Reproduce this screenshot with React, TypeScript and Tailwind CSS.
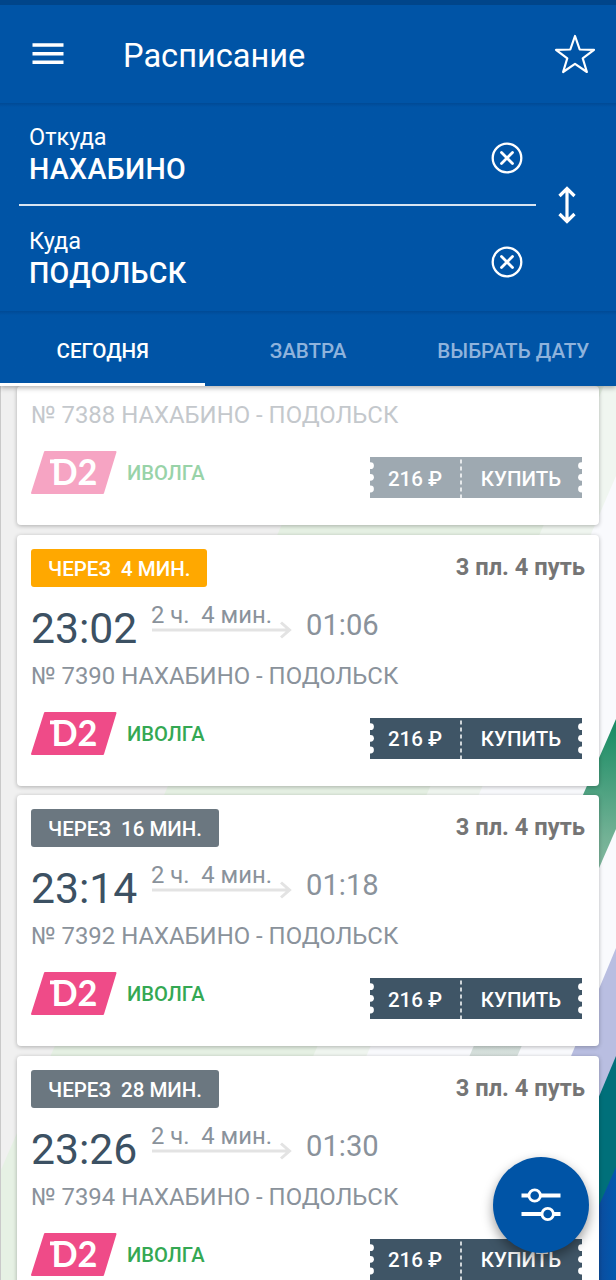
import { clsx } from "clsx";

interface Train {
  number: string;
  wait?: string;
  soon?: boolean;
  departed?: boolean;
  departure?: string;
  arrival?: string;
}

const trains: Train[] = [
  { number: "7388", departed: true },
  { number: "7390", wait: "4 МИН.", soon: true, departure: "23:02", arrival: "01:06" },
  { number: "7392", wait: "16 МИН.", departure: "23:14", arrival: "01:18" },
  { number: "7394", wait: "28 МИН.", departure: "23:26", arrival: "01:30" },
];

const tabs = ["СЕГОДНЯ", "ЗАВТРА", "ВЫБРАТЬ ДАТУ"];

export default function App() {
  return (
    <div className="relative flex h-[1280px] w-[616px] flex-col overflow-hidden bg-[#f0f0f0] font-[Roboto,sans-serif]">
      <header className="relative z-10 bg-[#0054a6] text-white shadow-[0_2px_5px_rgba(0,0,0,0.3)]">
        <div className="h-[5px] bg-[#00458a]" />
        <div className="flex h-[98px] items-center pl-8 pr-5">
          <MenuIcon />
          <h1 className="ml-[59px] flex-1 pt-1 text-[32.6px] leading-[38px]">Расписание</h1>
          <StarIcon />
        </div>

        <div className="flex h-[208px] bg-linear-to-b from-[#004a95] to-[#0054a6] to-[4px]">
          <div className="ml-[19px] w-[517px]">
            <Station label="Откуда" name="НАХАБИНО" />
            <div className="-mt-px mb-px h-[2px] bg-white/85" />
            <Station label="Куда" name="ПОДОЛЬСК" />
          </div>
          <div className="flex flex-1 justify-center pr-[18px] pt-[83px]">
            <SwapIcon />
          </div>
        </div>

        <nav className="grid h-[75px] grid-cols-3 bg-linear-to-b from-[#004a95] to-[#0054a6] to-[4px]">
          {tabs.map((tab, i) => (
            <div
              key={tab}
              className={clsx(
                "flex items-center justify-center whitespace-nowrap border-b-[3px] pt-2 text-[20.6px] font-medium",
                i === 0 ? "border-white" : "border-transparent text-[#8fb3dc]"
              )}
            >
              {tab}
            </div>
          ))}
        </nav>
      </header>

      <Backdrop />

      <main className="relative flex flex-col gap-[9.5px] px-[17px]">
        {trains.map((train) => (
          <TrainCard key={train.number} train={train} />
        ))}
      </main>

      <button className="absolute left-[493px] top-[1157px] z-20 flex size-24 items-center justify-center rounded-full bg-[#0054a6] shadow-[0_5px_12px_rgba(0,0,0,0.4)]">
        <FilterIcon />
      </button>
    </div>
  );
}

function Station({ label, name }: { label: string; name: string }) {
  return (
    <div className="flex h-[102px] items-start justify-between pl-[10px] pr-[13px]">
      <div className="pt-[18px]">
        <div className="text-[23.5px] leading-[32px]">{label}</div>
        <div className="text-[28.6px] font-medium leading-[33px] tracking-[0.3px]">{name}</div>
      </div>
      <ClearIcon />
    </div>
  );
}

function TrainCard({ train }: { train: Train }) {
  return (
    <section className="rounded-[4px] bg-white px-[14px] shadow-[0_1px_4px_rgba(0,0,0,0.28)]">
      {train.wait && (
        <>
          <div className="flex items-start justify-between pt-[14px]">
            <div
              className={clsx(
                "flex h-[38px] items-center whitespace-pre rounded-[3px] px-[17px] pt-[3px] text-[20.5px] font-medium text-white",
                train.soon ? "bg-[#ffa800]" : "bg-[#6b7780]"
              )}
            >
              {"ЧЕРЕЗ  " + train.wait}
            </div>
            <div className="text-[23.7px] font-bold leading-[36px] text-[#757575]">3 пл. 4 путь</div>
          </div>
          <div className="flex h-[70px] items-start">
            <div className="w-[120px] pt-[16px] text-[42.7px] leading-[50px] text-[#3c5163]">{train.departure}</div>
            <div className="w-[155px] pt-[14px] text-[#8a929b]">
              <div className="whitespace-pre text-[23.8px] leading-[28px]">{"2 ч.  4 мин."}</div>
              <ArrowIcon />
            </div>
            <div className="pt-[20px] text-[29.2px] leading-[36px] text-[#8a929b]">{train.arrival}</div>
          </div>
        </>
      )}
      <div className={train.departed ? "pt-[10px] opacity-50" : undefined}>
        <div className="h-[38px] text-[23.9px] leading-[39px] text-[#8a929b]">
          № {train.number} НАХАБИНО - ПОДОЛЬСК
        </div>
        <div className="flex h-[91px] items-start pt-[17px]">
          <LineLogo />
          <div className="ml-[10px] pt-[7px] text-[20.2px] font-medium leading-[31px] text-[#34a853]">ИВОЛГА</div>
          <Ticket />
        </div>
      </div>
    </section>
  );
}

function Ticket() {
  const notches = [8.7, 20.3, 32];
  return (
    <div className="relative ml-auto mr-[3px] mt-[6px] flex h-[41px] w-[212px] items-center text-[20.5px] font-medium text-white">
      <svg className="absolute inset-0" width="212" height="41" viewBox="0 0 212 41">
        <rect width="212" height="41" fill="#3f5566" />
        {notches.map((y) => (
          <g key={y} fill="#fff">
            <circle cx="0.5" cy={y} r="3.4" />
            <circle cx="211.5" cy={y} r="3.4" />
          </g>
        ))}
        <path d="M91 2.5V41" stroke="#fff" strokeWidth="1.5" strokeDasharray="4 3" />
      </svg>
      <span className="relative w-[90px] pt-[3px] text-center">216 ₽</span>
      <span className="relative w-[122px] pt-[3px] text-center">КУПИТЬ</span>
    </div>
  );
}

function LineLogo() {
  return (
    <svg className="overflow-visible" width="86" height="43" viewBox="0 0 86 43">
      <path d="M14 1H84.5L72 42H1Z" fill="#ef4b88" stroke="#ef4b88" strokeWidth="2" strokeLinejoin="round" />
      <path d="M19 10.4H28" stroke="#fff" strokeWidth="3.8" />
      <text x="20.5" y="34" fill="#fff" fontFamily="Lato, sans-serif" fontWeight="700" fontSize="35.5" textLength="46" lengthAdjust="spacingAndGlyphs">
        D2
      </text>
    </svg>
  );
}

function ArrowIcon() {
  return (
    <svg className="-mt-[8px]" width="142" height="18" viewBox="0 0 142 18" fill="none" stroke="#e3e3e3" strokeWidth="3">
      <path d="M1 9H139M130 1.5L138.5 9L130 16.5" />
    </svg>
  );
}

function MenuIcon() {
  return (
    <svg width="32" height="22" viewBox="0 0 32 22" fill="none" stroke="#fff" strokeWidth="3.4">
      <path d="M0.5 2H31.5M0.5 10.7H31.5M0.5 19.3H31.5" />
    </svg>
  );
}

function StarIcon() {
  return (
    <svg width="42" height="42" viewBox="0 0 42 42" fill="none" stroke="#fff" strokeWidth="2.2" strokeLinejoin="round">
      <path d="M21 3L25.7 16.5L40 16.8L28.7 25.3L32.9 39L21 30.8L9.1 39L13.3 25.3L2 16.8L16.3 16.5Z" />
    </svg>
  );
}

function ClearIcon() {
  return (
    <svg className="mt-[39px]" width="32" height="32" viewBox="0 0 32 32" fill="none" stroke="#fff" strokeLinecap="round">
      <circle cx="16" cy="16" r="14.3" strokeWidth="2.3" />
      <path d="M10.5 10.5L21.5 21.5M21.5 10.5L10.5 21.5" strokeWidth="2.8" />
    </svg>
  );
}

function SwapIcon() {
  return (
    <svg width="18" height="38" viewBox="0 0 18 38" fill="none" stroke="#fff" strokeWidth="3.2">
      <path d="M9 3V35M1.5 10L9 2.5L16.5 10M1.5 28L9 35.5L16.5 28" />
    </svg>
  );
}

function FilterIcon() {
  return (
    <svg width="40" height="34" viewBox="0 0 40 34" fill="#0054a6" stroke="#fff">
      <path d="M0.5 7.5H39.5M0.5 26H39.5" strokeWidth="4" />
      <circle cx="13.7" cy="7.5" r="5.7" strokeWidth="2.8" />
      <circle cx="26.7" cy="26" r="5.7" strokeWidth="2.8" />
    </svg>
  );
}

// Diagonal coloured stripes behind the list
function Backdrop() {
  return (
    <svg className="absolute inset-0" width="616" height="1280" viewBox="0 0 616 1280">
      <defs>
        <linearGradient id="green" gradientUnits="userSpaceOnUse" x1="0" y1="720" x2="0" y2="1060">
          <stop offset="0" stopColor="#168a62" />
          <stop offset="0.35" stopColor="#74b296" />
          <stop offset="1" stopColor="#d9e1de" />
        </linearGradient>
        <linearGradient id="blue" x1="0" x2="1" y1="0" y2="0">
          <stop offset="0.7" stopColor="#0b4ea0" />
          <stop offset="1" stopColor="#0058ae" />
        </linearGradient>
      </defs>
      <path d="M342 386H616V1280H0V1172Z" fill="#e6f1e4" />
      <path d="M604 386H616V1280H216Z" fill="#f0f6f0" />
      <path d="M616 476V1280H270Z" fill="#f9fafd" />
      <path d="M616 719V829L420 1280H372Z" fill="url(#green)" />
      <path d="M616 948V1280H478Z" fill="#b9bee1" />
      <path d="M616 1056V1280H522Z" fill="#00707a" />
      <path d="M616 1167V1280H566Z" fill="url(#blue)" />
      <path d="M0.5 386V1280" stroke="#c9c9c9" />
    </svg>
  );
}
